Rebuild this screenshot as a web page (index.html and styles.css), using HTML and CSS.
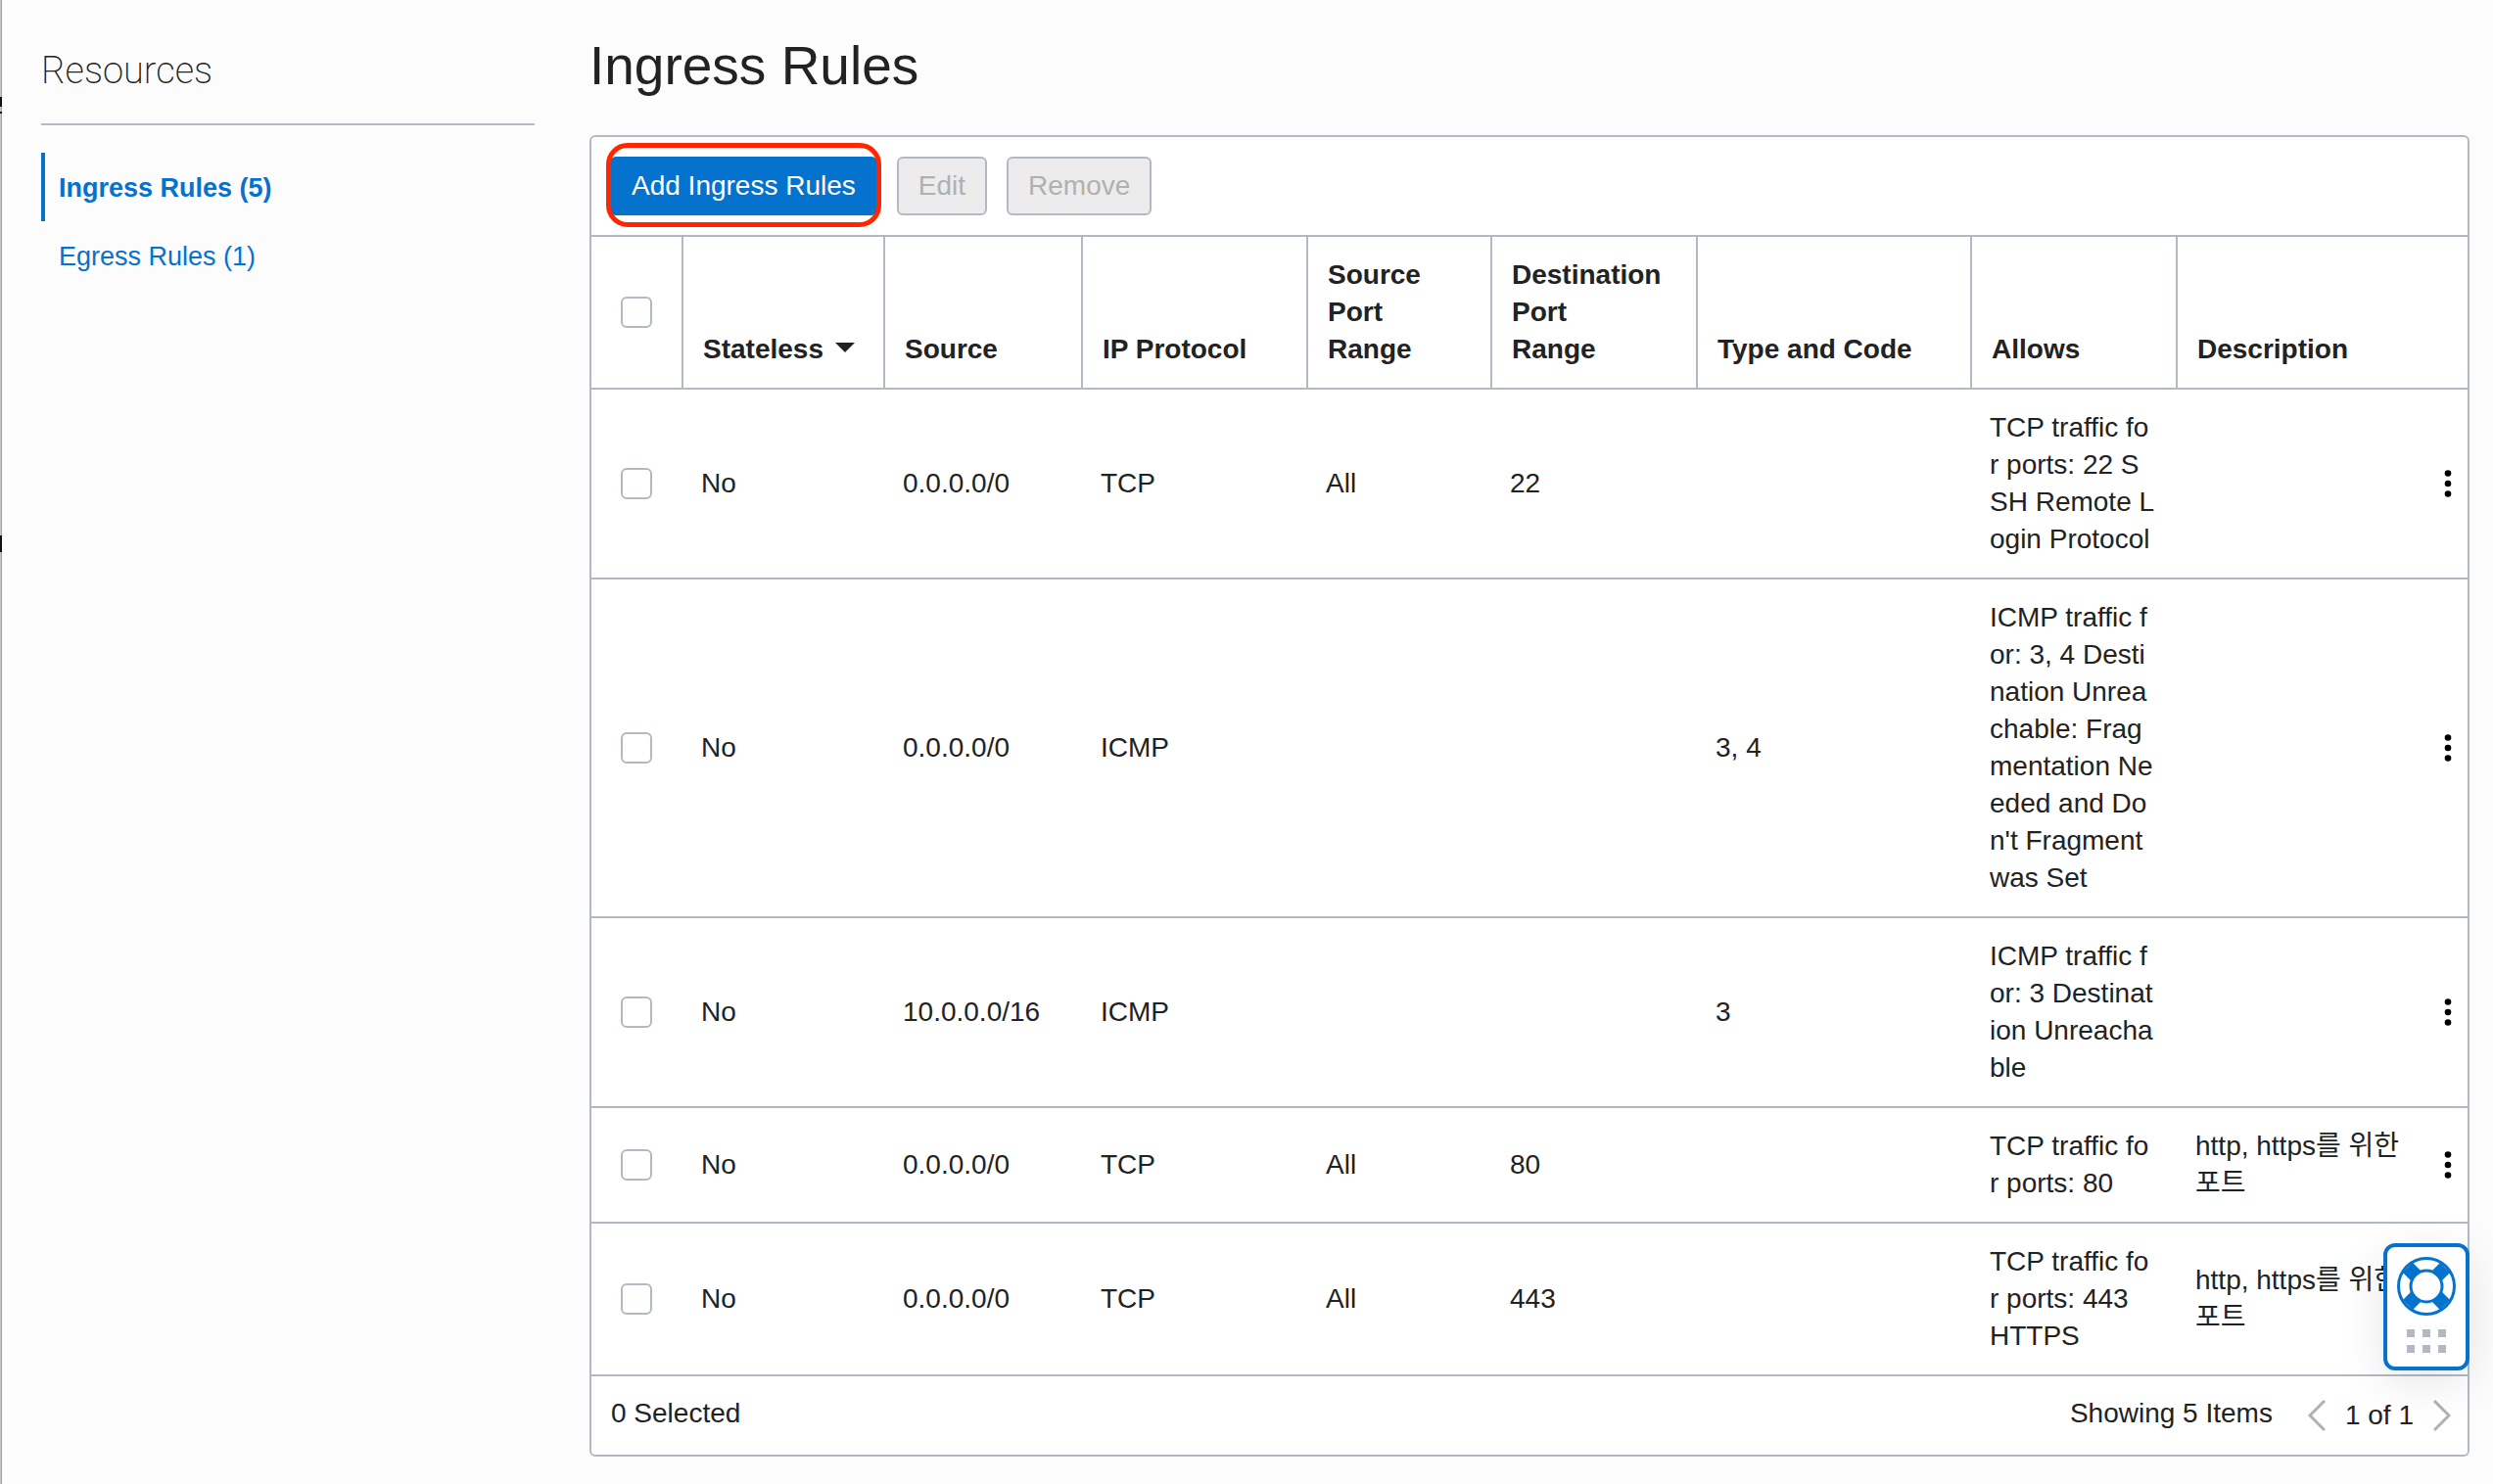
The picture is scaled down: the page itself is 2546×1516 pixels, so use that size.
FILE: index.html
```html
<!DOCTYPE html>
<html lang="en">
<head>
<meta charset="utf-8">
<title>Ingress Rules</title>
<link rel="stylesheet" href="styles.css">
</head>
<body>
<div class="page">
  <div class="page-edge"></div>
  <aside class="sidebar">
    <h2 class="sidebar-title">Resources</h2>
    <nav class="sidebar-nav">
      <a class="nav-link nav-link-active" href="#ingress">Ingress Rules (5)</a>
      <a class="nav-link" href="#egress">Egress Rules (1)</a>
    </nav>
  </aside>
  <main class="content">
    <h1 class="title">Ingress Rules</h1>
    <section class="card">
      <div class="toolbar">
        <span class="highlight"><button class="btn btn-primary" type="button">Add Ingress Rules</button></span>
        <button class="btn" type="button" disabled>Edit</button>
        <button class="btn" type="button" disabled>Remove</button>
      </div>
      <table class="rules">
        <colgroup>
          <col class="col-check"><col class="col-stateless"><col class="col-source"><col class="col-protocol"><col class="col-sport"><col class="col-dport"><col class="col-type"><col class="col-allows"><col class="col-desc"><col class="col-menu">
        </colgroup>
        <thead>
          <tr>
            <th class="check-cell"><input class="check" type="checkbox" aria-label="Select all rules"></th>
            <th>Stateless<svg class="sort" viewBox="0 0 20 10" aria-hidden="true"><path d="M0 0h20L10 10z"/></svg></th>
            <th>Source</th>
            <th>IP Protocol</th>
            <th>Source Port Range</th>
            <th>Destination Port Range</th>
            <th>Type and Code</th>
            <th>Allows</th>
            <th colspan="2">Description</th>
          </tr>
        </thead>
        <tbody>
          <tr>
            <td class="check-cell"><input class="check" type="checkbox" aria-label="Select rule 1"></td>
            <td>No</td><td>0.0.0.0/0</td><td>TCP</td><td>All</td><td>22</td><td></td>
            <td>TCP traffic for ports: 22 SSH Remote Login Protocol</td>
            <td class="desc"></td>
            <td class="menu-cell"><button class="menu" type="button" aria-label="Actions"><svg class="dots" viewBox="0 0 8 28"><circle cx="4" cy="3.5" r="3.3"/><circle cx="4" cy="14" r="3.3"/><circle cx="4" cy="24.5" r="3.3"/></svg></button></td>
          </tr>
          <tr>
            <td class="check-cell"><input class="check" type="checkbox" aria-label="Select rule 2"></td>
            <td>No</td><td>0.0.0.0/0</td><td>ICMP</td><td></td><td></td><td>3, 4</td>
            <td>ICMP traffic for: 3, 4 Destination Unreachable: Fragmentation Needed and Don't Fragment was Set</td>
            <td class="desc"></td>
            <td class="menu-cell"><button class="menu" type="button" aria-label="Actions"><svg class="dots" viewBox="0 0 8 28"><circle cx="4" cy="3.5" r="3.3"/><circle cx="4" cy="14" r="3.3"/><circle cx="4" cy="24.5" r="3.3"/></svg></button></td>
          </tr>
          <tr>
            <td class="check-cell"><input class="check" type="checkbox" aria-label="Select rule 3"></td>
            <td>No</td><td>10.0.0.0/16</td><td>ICMP</td><td></td><td></td><td>3</td>
            <td>ICMP traffic for: 3 Destination Unreachable</td>
            <td class="desc"></td>
            <td class="menu-cell"><button class="menu" type="button" aria-label="Actions"><svg class="dots" viewBox="0 0 8 28"><circle cx="4" cy="3.5" r="3.3"/><circle cx="4" cy="14" r="3.3"/><circle cx="4" cy="24.5" r="3.3"/></svg></button></td>
          </tr>
          <tr>
            <td class="check-cell"><input class="check" type="checkbox" aria-label="Select rule 4"></td>
            <td>No</td><td>0.0.0.0/0</td><td>TCP</td><td>All</td><td>80</td><td></td>
            <td>TCP traffic for ports: 80</td>
            <td class="desc" lang="ko">http, https를 위한 포트</td>
            <td class="menu-cell"><button class="menu" type="button" aria-label="Actions"><svg class="dots" viewBox="0 0 8 28"><circle cx="4" cy="3.5" r="3.3"/><circle cx="4" cy="14" r="3.3"/><circle cx="4" cy="24.5" r="3.3"/></svg></button></td>
          </tr>
          <tr>
            <td class="check-cell"><input class="check" type="checkbox" aria-label="Select rule 5"></td>
            <td>No</td><td>0.0.0.0/0</td><td>TCP</td><td>All</td><td>443</td><td></td>
            <td>TCP traffic for ports: 443 HTTPS</td>
            <td class="desc" lang="ko">http, https를 위한 포트</td>
            <td class="menu-cell"><button class="menu" type="button" aria-label="Actions"><svg class="dots" viewBox="0 0 8 28"><circle cx="4" cy="3.5" r="3.3"/><circle cx="4" cy="14" r="3.3"/><circle cx="4" cy="24.5" r="3.3"/></svg></button></td>
          </tr>
        </tbody>
      </table>
      <footer class="footer">
        <span class="selected">0 Selected</span>
        <span class="showing">Showing 5 Items</span>
        <div class="pager">
          <button class="page-btn" type="button" aria-label="Previous page" disabled><svg class="chevron" viewBox="0 0 18 32"><path d="M17 1L2 16l15 15"/></svg></button>
          <span>1 of 1</span>
          <button class="page-btn" type="button" aria-label="Next page" disabled><svg class="chevron" viewBox="0 0 18 32"><path d="M1 1l15 15L1 31"/></svg></button>
        </div>
      </footer>
    </section>
  </main>
</div>
<button class="help" type="button" aria-label="Help">
  <svg class="help-icon" viewBox="0 0 60 60">
    <circle cx="30" cy="30" r="28.5" fill="#fff" stroke="#0572ce" stroke-width="3"/>
    <path d="M11 11l38 38M49 11L11 49" stroke="#0572ce" stroke-width="14.4"/>
    <circle cx="30" cy="30" r="16" fill="#fff" stroke="#0572ce" stroke-width="3"/>
  </svg>
  <svg class="grip" viewBox="0 0 40 24"><path d="M0 0h8v8H0zM16 0h8v8h-8zM32 0h8v8h-8zM0 16h8v8H0zM16 16h8v8h-8zM32 16h8v8h-8z"/></svg>
</button>
</body>
</html>
```
FILE: styles.css
```css
:root {
  --line: #b3b9c3;
  --blue: #0572ce;
  --text: #222;
}

* {
  box-sizing: border-box;
}

body {
  margin: 0;
  background: #fcfcfc;
  color: var(--text);
  font: 28px/38px "Liberation Sans", "Noto Sans CJK KR", sans-serif;
}

.page {
  display: flex;
  min-height: 100vh;
}

/* Sliver of the window behind, along the left edge */
.page-edge {
  width: 2px;
  background:
    linear-gradient(#111, #111) 0 99px / 2px 10px no-repeat,
    linear-gradient(#111, #111) 0 114px / 2px 2px no-repeat,
    linear-gradient(#111, #111) 0 547px / 2px 17px no-repeat,
    linear-gradient(90deg, #c4c4c4 50%, #a4a4a4 50%);
}

.sidebar {
  width: 504px;
  margin: 0 56px 0 40px;
}

.sidebar-title {
  margin: 0;
  padding: 50px 0 32px;
  border-bottom: 2px solid var(--line);
  font: 200 38px/44px Roboto, "Liberation Sans", sans-serif;
}

.sidebar-nav {
  display: flex;
  flex-direction: column;
  padding-top: 28px;
  font-size: 27px;
}

.nav-link {
  padding: 17px 14px 15px;
  border-left: 4px solid transparent;
  color: var(--blue);
  text-decoration: none;
}

.nav-link-active {
  border-color: var(--blue);
  font-weight: bold;
}

.content {
  flex: 1;
  min-width: 0;
  padding-right: 24px;
}

.title {
  margin: 0;
  padding: 35px 0 39px;
  font-size: 55px;
  font-weight: normal;
  line-height: 64px;
}

.card {
  border: 2px solid var(--line);
  border-radius: 6px;
  background: #fff;
}

.toolbar {
  display: flex;
  gap: 20px;
  padding: 20px 19px;
}

.highlight {
  position: relative;
}

.highlight::after {
  content: "";
  position: absolute;
  inset: -14px -4px -12px;
  border: 5px solid #ff2600;
  border-radius: 22px;
  pointer-events: none;
}

.btn {
  height: 60px;
  padding: 0 20px;
  border: 2px solid var(--line);
  border-radius: 6px;
  background: #ececec;
  color: #b0b0b0;
  font: inherit;
}

.btn-primary {
  border-color: var(--blue);
  background: var(--blue);
  color: #fff;
}

.rules {
  width: 100%;
  table-layout: fixed;
  border-collapse: separate;
  border-spacing: 0;
}

.col-check { width: 94px; }
.col-stateless { width: 206px; }
.col-source { width: 202px; }
.col-protocol { width: 230px; }
.col-sport { width: 188px; }
.col-dport { width: 210px; }
.col-type { width: 280px; }
.col-allows { width: 210px; }
.col-desc { width: 256px; }
.col-menu { width: 40px; }

.rules th {
  padding: 20px 44px 20px 20px;
  border-top: 2px solid var(--line);
  border-right: 2px solid var(--line);
  text-align: left;
  vertical-align: bottom;
}

.rules th:nth-child(2) {
  padding-right: 20px;
}

.rules th:last-child {
  border-right: 0;
}

.rules td {
  padding: 20px 23px 20px 18px;
  border-top: 2px solid var(--line);
  vertical-align: middle;
  word-break: break-all;
}

.rules .desc {
  padding-right: 20px;
}

.rules .check-cell {
  padding: 0 2px 0 0;
  text-align: center;
  vertical-align: middle;
}

.rules th.check-cell {
  padding: 0;
}

.check {
  display: block;
  width: 32px;
  height: 32px;
  margin: 0 auto;
  appearance: none;
  border: 2px solid var(--line);
  border-radius: 6px;
  background: #fff;
}

.sort {
  width: 20px;
  height: 10px;
  margin-left: 12px;
  vertical-align: 6px;
  fill: var(--text);
}

.rules .menu-cell {
  padding: 0;
}

.menu,
.page-btn {
  display: block;
  padding: 0;
  border: 0;
  background: none;
}

.menu {
  margin: 0 auto;
}

.dots {
  display: block;
  width: 8px;
  height: 28px;
}

.footer {
  display: flex;
  align-items: center;
  height: 82px;
  padding: 0 17px 0 20px;
  border-top: 2px solid var(--line);
}

.selected,
.showing {
  padding-bottom: 4px;
}

.showing {
  margin-left: auto;
}

.pager {
  display: flex;
  align-items: center;
  gap: 20px;
  margin-left: 36px;
}

.chevron {
  display: block;
  width: 18px;
  height: 32px;
  fill: none;
  stroke: #b0b0b0;
  stroke-width: 3;
}

/* Floating help launcher, always on top of the page */
.help {
  position: fixed;
  right: 24px;
  bottom: 116px;
  display: flex;
  flex-direction: column;
  align-items: center;
  gap: 14px;
  width: 88px;
  height: 130px;
  padding: 10px 0 0;
  border: 4px solid var(--blue);
  border-radius: 12px;
  background: #fff;
  box-shadow: 0 12px 48px rgba(0, 0, 0, 0.1);
}

.help-icon {
  width: 60px;
  height: 60px;
}

.grip {
  width: 40px;
  height: 24px;
  fill: var(--line);
}
```
